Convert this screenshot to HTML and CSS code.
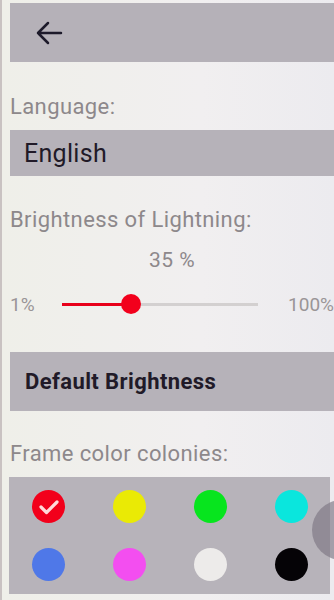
FILE: index.html
```html
<!DOCTYPE html>
<html>
<head>
<meta charset="utf-8">
<link rel="stylesheet" href="styles.css">
</head>
<body>
<div class="page">
  <div class="topbar">
    <svg class="back" width="28" height="24" viewBox="0 0 28 24">
      <path d="M26 12H3M13 2L3 12l10 10" fill="none" stroke="#1d1a2a" stroke-width="2.5" stroke-linecap="round" stroke-linejoin="round"/>
    </svg>
  </div>
  <div class="label lang-label">Language:</div>
  <div class="bar lang-bar">English</div>
  <div class="label bright-label">Brightness of Lightning:</div>
  <div class="value">35 %</div>
  <div class="slider-row">
    <span class="min">1%</span>
    <div class="track">
      <div class="fill" style="width:35%"></div>
      <div class="thumb" style="left:35%"></div>
    </div>
    <span class="max">100%</span>
  </div>
  <div class="bar default-bar">Default Brightness</div>
  <div class="label frame-label">Frame color colonies:</div>
  <div class="palette">
    <div class="swatch red"><svg width="22" height="18" viewBox="0 0 22 18"><path d="M3 9l5.5 5.5L19 4" fill="none" stroke="#ffd9d9" stroke-width="3.2" stroke-linecap="round" stroke-linejoin="round"/></svg></div>
    <div class="swatch yellow"></div>
    <div class="swatch green"></div>
    <div class="swatch cyan"></div>
    <div class="swatch blue"></div>
    <div class="swatch magenta"></div>
    <div class="swatch white"></div>
    <div class="swatch black"></div>
  </div>
  <div class="fab"></div>
</div>
</body>
</html>
```
FILE: styles.css
```css
html, body {
  margin: 0;
  padding: 0;
}
body {
  background: #efeeeb;
  font-family: Roboto, "Noto Sans", sans-serif;
  overflow: hidden;
}
.page {
  position: relative;
  width: 334px;
  height: 600px;
  overflow: hidden;
  display: flex;
  flex-direction: column;
  padding-left: 8px;
  box-sizing: border-box;
  background: linear-gradient(90deg, #efefe9 0%, #f1eff0 60%, #ecebef 100%);
  border-left: 2px solid #c9c2c2;
}
.topbar {
  margin-top: 3px;
  height: 59px;
  background: #b5b1b8;
  display: flex;
  align-items: center;
  padding-left: 25px;
  flex-shrink: 0;
}
.back {
  display: block;
}
.label {
  font-size: 22px;
  letter-spacing: 0.4px;
  color: #8d888b;
  line-height: 24px;
  white-space: nowrap;
}
.lang-label {
  margin-top: 33px;
}
.bar {
  background: #b6b2b9;
  color: #211a28;
  display: flex;
  align-items: center;
  padding-left: 14px;
  flex-shrink: 0;
  white-space: nowrap;
}
.lang-bar {
  margin-top: 11px;
  height: 46px;
  font-size: 25px;
  letter-spacing: 0.3px;
}
.bright-label {
  margin-top: 32px;
}
.value {
  margin-top: 16px;
  font-size: 21px;
  letter-spacing: 0.5px;
  color: #8d888b;
  line-height: 24px;
  text-align: center;
}
.slider-row {
  margin-top: 20px;
  height: 24px;
  display: flex;
  align-items: center;
  font-size: 19px;
  color: #9a9597;
  white-space: nowrap;
}
.min {
  width: 52px;
  flex-shrink: 0;
}
.track {
  position: relative;
  width: 196px;
  height: 3px;
  background: #d3d0d0;
  flex-shrink: 0;
}
.fill {
  height: 3px;
  background: #e8001a;
}
.thumb {
  position: absolute;
  top: 50%;
  width: 20px;
  height: 20px;
  margin-left: -10px;
  margin-top: -10px;
  border-radius: 50%;
  background: #f2001c;
}
.max {
  margin-left: auto;
}
.default-bar {
  margin-top: 36px;
  height: 59px;
  font-size: 22px;
  letter-spacing: 0.4px;
  font-weight: bold;
  padding-left: 15px;
}
.frame-label {
  margin-top: 31px;
}
.palette {
  margin-top: 11px;
  margin-left: -1px;
  width: 321px;
  height: 117px;
  flex-shrink: 0;
  background: #b7b3ba;
  display: grid;
  grid-template-columns: repeat(4, 81px);
  grid-template-rows: 58px 58px;
  padding: 0 0 0 23px;
  align-content: center;
  box-sizing: border-box;
}
.swatch {
  width: 33px;
  height: 33px;
  border-radius: 50%;
  align-self: center;
  display: flex;
  align-items: center;
  justify-content: center;
}
.red { background: #f2001b; }
.yellow { background: #eaea05; }
.green { background: #07e51e; }
.cyan { background: #0ae6dd; }
.blue { background: #4f78e8; }
.magenta { background: #f34ef0; }
.white { background: #edebea; }
.black { background: #050306; }
.fab {
  position: absolute;
  left: 310px;
  top: 500px;
  width: 60px;
  height: 60px;
  border-radius: 50%;
  background: rgba(125, 119, 130, 0.65);
}
```
